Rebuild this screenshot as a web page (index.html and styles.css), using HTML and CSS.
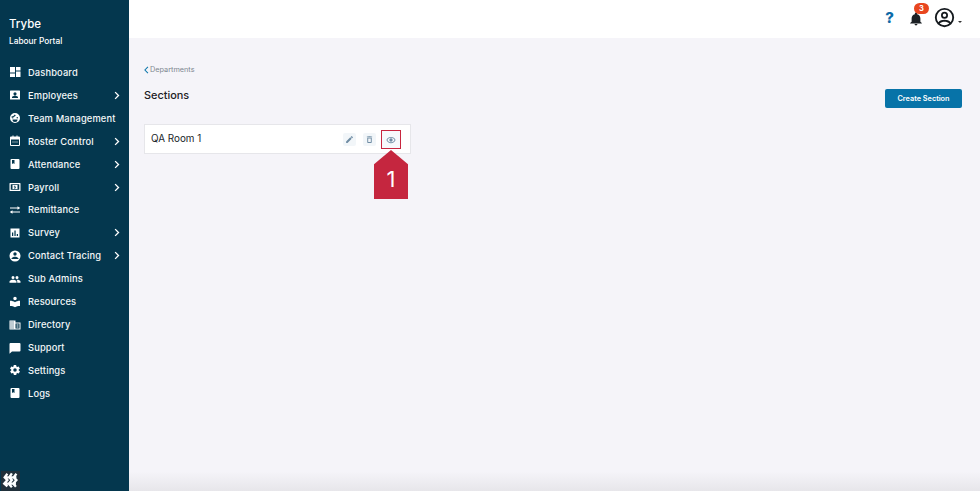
FILE: index.html
```html
<!DOCTYPE html>
<html lang="en">
<head>
<meta charset="utf-8">
<title>Sections</title>
<link rel="stylesheet" href="styles.css">
</head>
<body>
<div class="app">
  <aside class="sidebar">
    <div class="brand">Trybe</div>
    <div class="portal">Labour Portal</div>
    <nav class="nav">
      <a class="item"><svg class="ic" viewBox="0 0 24 24"><path d="M2 13h10V2H2zm0 9h10v-7H2zm12 0h9V11h-9zm0-20v7h9V2z"/></svg><span class="label">Dashboard</span></a>
      <a class="item"><svg class="ic" viewBox="0 0 24 24"><path d="M3 3h18a1 1 0 0 1 1 1v16a1 1 0 0 1-1 1H3a1 1 0 0 1-1-1V4a1 1 0 0 1 1-1zm9 3.500a3.200 3.200 0 1 0 0 6.400 3.200 3.200 0 0 0 0-6.400zM6 18h12v-1.500c0-2-4-3-6-3s-6 1-6 3z" fill-rule="evenodd"/></svg><span class="label">Employees</span><svg class="chev" viewBox="0 0 8 12"><path d="M1.500 1.500 6 6l-4.500 4.500"/></svg></a>
      <a class="item"><svg class="ic" viewBox="0 0 24 24"><path fill-rule="evenodd" d="M12 2a10 10 0 1 0 0 20 10 10 0 0 0 0-20zM7.500 10a1.500 1.500 0 1 1 0 3 1.500 1.500 0 0 1 0-3zm9 0a1.500 1.500 0 1 1 0 3 1.500 1.500 0 0 1 0-3zM7 15h10a5 5 0 0 1-10 0zM5 9c3 0 5-1.500 6.500-4l2 1.500C12 9 9 11 5 11z"/></svg><span class="label">Team Management</span></a>
      <a class="item"><svg class="ic" viewBox="0 0 24 24"><path fill-rule="evenodd" d="M7 1h2v2h6V1h2v2h3a2 2 0 0 1 2 2v15a2 2 0 0 1-2 2H4a2 2 0 0 1-2-2V5a2 2 0 0 1 2-2h3zM4 9v11h16V9zm3 4h2v2H7zm4 0h2v2h-2zm4 0h2v2h-2z"/></svg><span class="label">Roster Control</span><svg class="chev" viewBox="0 0 8 12"><path d="M1.500 1.500 6 6l-4.500 4.500"/></svg></a>
      <a class="item"><svg class="ic" viewBox="0 0 24 24"><path fill-rule="evenodd" d="M5 2h14a2 2 0 0 1 2 2v16a2 2 0 0 1-2 2H5a2 2 0 0 1-2-2V4a2 2 0 0 1 2-2zm1 2v8l2.500-1.500L11 12V4z"/></svg><span class="label">Attendance</span><svg class="chev" viewBox="0 0 8 12"><path d="M1.500 1.500 6 6l-4.500 4.500"/></svg></a>
      <a class="item"><svg class="ic" viewBox="0 0 24 24"><path fill-rule="evenodd" d="M2 4h20a1 1 0 0 1 1 1v14a1 1 0 0 1-1 1H2a1 1 0 0 1-1-1V5a1 1 0 0 1 1-1zm1.500 2.500v11h17v-11zM7 8h10v8H7zm4.200 1v.8c-1 .2-1.500.8-1.500 1.500 0 1 .9 1.300 1.800 1.500.7.200 1 .3 1 .6s-.4.5-1 .5c-.6 0-1.100-.2-1.500-.5l-.4.800c.4.300 1 .5 1.600.6v.7h1v-.7c1-.2 1.600-.8 1.600-1.600 0-1-.9-1.300-1.800-1.500-.7-.2-1-.3-1-.6s.3-.4.8-.4.900.1 1.300.3l.3-.8c-.4-.2-.8-.4-1.200-.4V9z"/></svg><span class="label">Payroll</span><svg class="chev" viewBox="0 0 8 12"><path d="M1.500 1.500 6 6l-4.500 4.500"/></svg></a>
      <a class="item"><svg class="ic" viewBox="0 0 24 24"><path d="M17 4.500 22.500 8 17 11.500V9H2V7h15zM7 12.500V15h15v2H7v2.500L1.500 16z"/></svg><span class="label">Remittance</span></a>
      <a class="item"><svg class="ic" viewBox="0 0 24 24"><path fill-rule="evenodd" d="M3 3h18v18H3zm3 8v7h2.500v-7zm4.800-4v11h2.500V7zm4.700 7v4H18v-4z"/></svg><span class="label">Survey</span><svg class="chev" viewBox="0 0 8 12"><path d="M1.500 1.500 6 6l-4.500 4.500"/></svg></a>
      <a class="item"><svg class="ic" viewBox="0 0 24 24"><path fill-rule="evenodd" d="M12 1a11 11 0 1 0 0 22 11 11 0 0 0 0-22zm0 3.500a3.400 3.400 0 1 1 0 6.800 3.400 3.400 0 0 1 0-6.800zM5 17c1-2.300 4.500-3.500 7-3.500s6 1.200 7 3.500v1H5z"/></svg><span class="label">Contact Tracing</span><svg class="chev" viewBox="0 0 8 12"><path d="M1.500 1.500 6 6l-4.500 4.500"/></svg></a>
      <a class="item"><svg class="ic" viewBox="0 0 24 24"><path d="M8 6a3 3 0 1 1 0 6 3 3 0 0 1 0-6zm8 0a3 3 0 1 1 0 6 3 3 0 0 1 0-6zM8 13.500c2.500 0 7 1.200 7 3.500v2.500H1V17c0-2.300 4.500-3.500 7-3.500zm8.500 0c2.500 0 6.500 1.200 6.500 3.500v2.500h-6.500V17c0-1.400-.7-2.600-1.800-3.300z"/></svg><span class="label">Sub Admins</span></a>
      <a class="item"><svg class="ic" viewBox="0 0 24 24"><path d="M12 1.500a3.500 3.500 0 1 1 0 7 3.500 3.500 0 0 1 0-7zM2 9.500c4 0 7.500 1 10 3 2.500-2 6-3 10-3V20c-4 0-7.500 1-10 2.500C9.500 21 6 20 2 20z"/></svg><span class="label">Resources</span></a>
      <a class="item"><svg class="ic" viewBox="0 0 24 24"><path fill-rule="evenodd" d="M1 3h12v4h10v14H1zm2 2v2h2V5zm4 0v2h2V5zM3 9v2h2V9zm4 0v2h2V9zm-4 4v2h2v-2zm4 0v2h2v-2zm-4 4v2h2v-2zm4 0v2h2v-2zm6-8v10h8V9zm2 2h4v2h-4zm0 4h4v2h-4z"/></svg><span class="label">Directory</span></a>
      <a class="item"><svg class="ic" viewBox="0 0 24 24"><path d="M3 2h18a2 2 0 0 1 2 2v13a2 2 0 0 1-2 2H6l-5 4.500V4a2 2 0 0 1 2-2z"/></svg><span class="label">Support</span></a>
      <a class="item"><svg class="ic" viewBox="0 0 24 24"><path d="M19.400 13c.1-.3.100-.7.100-1s0-.7-.1-1l2.100-1.600c.2-.1.200-.4.100-.6l-2-3.500c-.1-.2-.4-.3-.6-.2l-2.500 1a7.500 7.500 0 0 0-1.700-1l-.4-2.700c0-.2-.2-.4-.5-.4h-4c-.3 0-.5.200-.5.400l-.4 2.700c-.6.200-1.200.6-1.700 1l-2.500-1c-.2-.1-.5 0-.6.200l-2 3.500c-.1.200-.1.500.1.600L4.600 11c-.1.300-.1.700-.1 1s0 .7.100 1l-2.100 1.600c-.2.100-.2.400-.1.600l2 3.500c.1.200.4.300.6.200l2.500-1c.5.400 1.100.8 1.700 1l.4 2.700c0 .2.200.4.500.4h4c.3 0 .5-.2.500-.4l.4-2.700c.6-.2 1.200-.6 1.700-1l2.500 1c.2.100.5 0 .6-.2l2-3.500c.1-.2.100-.5-.1-.6zM12 15.500a3.500 3.500 0 1 1 0-7 3.500 3.500 0 0 1 0 7z" fill-rule="evenodd"/></svg><span class="label">Settings</span></a>
      <a class="item"><svg class="ic" viewBox="0 0 24 24"><path fill-rule="evenodd" d="M5 2h14a2 2 0 0 1 2 2v16a2 2 0 0 1-2 2H5a2 2 0 0 1-2-2V4a2 2 0 0 1 2-2zm1 2v8l2.500-1.500L11 12V4z"/></svg><span class="label">Logs</span></a>
    </nav>
    <div class="logo-box">
      <svg class="logo" viewBox="0 0 20 20"><path d="M6 2 3 6l3 3-3.500 4 3.500 3M11 1.500 8 6l3 3-3.500 4 3.500 4M16 2l-3 4 3 3-3.500 4 3 3.500M3 6l13 0M2.500 13l13 0"/></svg>
    </div>
  </aside>
  <div class="main">
    <header class="topbar">
      <span class="help">?</span>
      <span class="bell">
        <svg class="bell-ic" viewBox="0 0 24 24"><path d="M12 23a2.500 2.500 0 0 0 2.500-2.500h-5A2.500 2.500 0 0 0 12 23zm7.500-6.500V11c0-3.400-2-6.200-5.500-7V3a2 2 0 1 0-4 0v1c-3.500.8-5.500 3.600-5.500 7v5.500L2 19v.5h20V19z"/></svg>
        <span class="badge">3</span>
      </span>
      <span class="user">
        <svg class="user-ic" viewBox="0 0 24 24"><path fill-rule="evenodd" d="M12 1a11 11 0 1 0 0 22 11 11 0 0 0 0-22zm0 2.200a8.800 8.800 0 0 1 7 14.100c-1.500-1.800-4.500-2.600-7-2.600s-5.500.8-7 2.600A8.800 8.800 0 0 1 12 3.200zM12 5.500a4 4 0 1 0 0 8 4 4 0 0 0 0-8zm0 2a2 2 0 1 1 0 4 2 2 0 0 1 0-4zm0 9.400c2 0 4.300.6 5.500 1.900A8.800 8.800 0 0 1 12 20.800a8.800 8.800 0 0 1-5.500-2c1.200-1.300 3.500-1.900 5.500-1.900z"/></svg>
        <span class="caret"></span>
      </span>
    </header>
    <main class="content">
      <div class="crumb"><svg class="crumb-ic" viewBox="0 0 6 10"><path d="M4.800 1 1 5l3.800 4"/></svg>Departments</div>
      <div class="head">
        <h1 class="title">Sections</h1>
        <button class="create">Create Section</button>
      </div>
      <div class="card">
        <span class="card-name">QA Room 1</span>
        <div class="actions">
          <span class="act"><svg class="act-ic" viewBox="0 0 24 24"><path d="M3 17.250V21h3.750L17.810 9.940l-3.750-3.750zM20.710 7.040a1 1 0 0 0 0-1.410l-2.340-2.340a1 1 0 0 0-1.410 0l-1.830 1.830 3.750 3.750z"/></svg></span>
          <span class="act"><svg class="act-ic" viewBox="0 0 24 24"><path fill-rule="evenodd" d="M6 7h12v12a2 2 0 0 1-2 2H8a2 2 0 0 1-2-2zm2.500 2.500v9h7v-9zM15.500 4H19v2H5V4h3.500l1-1h5z"/></svg></span>
          <span class="view"><svg class="view-ic" viewBox="0 0 24 24"><path fill-rule="evenodd" d="M12 4.500C7 4.500 2.700 7.600 1 12c1.700 4.400 6 7.500 11 7.500s9.300-3.100 11-7.500c-1.700-4.400-6-7.500-11-7.500zm0 2c3.700 0 7 2.100 8.700 5.500-1.700 3.400-5 5.500-8.700 5.500S5 15.400 3.300 12C5 8.600 8.300 6.500 12 6.500zM12 8a4 4 0 1 0 0 8 4 4 0 0 0 0-8z"/></svg></span>
        </div>
      </div>
    </main>
    <div class="callout"><span class="callout-num">1</span></div>
  </div>
</div>
</body>
</html>
```
FILE: styles.css
```css
* { box-sizing: border-box; }
html, body { margin: 0; height: 100%; overflow: hidden; }
body { font-family: Inter, "Liberation Sans", sans-serif; color: #1c2024; }
.app { display: flex; width: 980px; height: 491px; }

.sidebar {
  position: relative;
  width: 129px;
  flex: none;
  background: #04374e;
  color: #fff;
  padding: 17px 0 0 9px;
}
.brand { font-size: 11.5px; font-weight: 500; line-height: 14px; }
.portal { font-size: 8.3px; font-weight: 500; line-height: 12px; margin-top: 4px; }
.nav { display: flex; flex-direction: column; margin-top: 14px; }
.item { display: flex; align-items: center; height: 22.93px; color: #f4f7f9; font-size: 9.3px; font-weight: 500; letter-spacing: .15px; }
.ic { width: 12px; height: 12px; fill: #fff; flex: none; margin-right: 7px; }
.label { white-space: nowrap; }
.chev { width: 6px; height: 9px; fill: none; stroke: #fff; stroke-width: 1.800; position: absolute; left: 113.500px; }
.logo-box { position: absolute; left: 1px; bottom: 0; width: 19px; height: 20px; background: #21303a; display: flex; align-items: center; justify-content: center; }
.logo { width: 18px; height: 18px; fill: none; stroke: #fff; stroke-width: 2.600; }

.main { position: relative; flex: 1; display: flex; flex-direction: column; background: linear-gradient(#f5f4f9 0, #f5f4f9 96%, #e7e6ea 100%); }
.topbar { height: 38px; background: #fff; display: flex; align-items: center; justify-content: flex-end; padding-right: 18px; flex: none; }
.help { color: #0d6ba8; font-size: 15px; font-weight: 800; line-height: 1; margin-right: 15px; margin-top: -4px; }
.bell { position: relative; display: block; width: 14px; height: 14px; margin-right: 11px; margin-top: -1px; }
.bell-ic { width: 14px; height: 14px; fill: #1b2024; display: block; }
.badge { position: absolute; left: 5px; top: -9px; width: 15px; height: 11px; border-radius: 6px; background: #e8461f; color: #fff; font-size: 7.500px; font-weight: 700; line-height: 11px; text-align: center; }
.user { display: flex; align-items: flex-end; margin-top: -3px; }
.user-ic { width: 21px; height: 21px; fill: #14191d; display: block; }
.caret { width: 0; height: 0; border: 2px solid transparent; border-top-color: #333; border-bottom: 0; margin-left: 3px; margin-bottom: 5px; }

.content { padding: 27px 18px 0 15px; }
.crumb { display: flex; align-items: center; color: #7d8790; font-size: 7.300px; line-height: 10px; height: 10px; }
.crumb-ic { width: 5px; height: 8px; fill: none; stroke: #0d77ab; stroke-width: 1.300; margin-right: 1px; }
.head { display: flex; justify-content: space-between; align-items: flex-start; margin-top: 14px; height: 37px; }
.title { margin: 0; font-size: 10.900px; font-weight: 500; line-height: 16px; margin-top: -2px; }
.create { width: 77px; height: 19px; margin-top: 0; border: 0; border-radius: 2px; background: #0773a8; color: #fff; font-family: inherit; font-size: 7.300px; font-weight: 600; padding: 0; }
.card { display: flex; align-items: center; justify-content: space-between; width: 267px; height: 30px; margin-top: -2px; background: #fff; border: 1px solid #e6e6ea; padding: 0 9px 0 6px; }
.card-name { font-size: 9.900px; line-height: 14px; margin-top: -3px; color: #20262a; }
.actions { display: flex; align-items: center; gap: 7.500px; margin-top: 1px; }
.act { display: flex; align-items: center; justify-content: center; width: 13px; height: 13px; background: #f2f6f9; border-radius: 2px; }
.act-ic { width: 9px; height: 9px; fill: #6f8ca3; }
.view { display: flex; align-items: center; justify-content: center; width: 20px; height: 19px; margin-left: -2.500px; border: 1.500px solid #c8263f; background: #f7f9fb; }
.view-ic { width: 10px; height: 10px; fill: #6f8ca3; }
.callout { position: absolute; left: 245px; top: 150px; width: 34px; height: 49px; background: #c5263f; clip-path: polygon(50% 0, 100% 29%, 100% 100%, 0 100%, 0 29%); display: flex; align-items: center; justify-content: center; padding-top: 9px; color: #fff; }
.callout-num { font-size: 22px; font-weight: 400; line-height: 28px; }
```
